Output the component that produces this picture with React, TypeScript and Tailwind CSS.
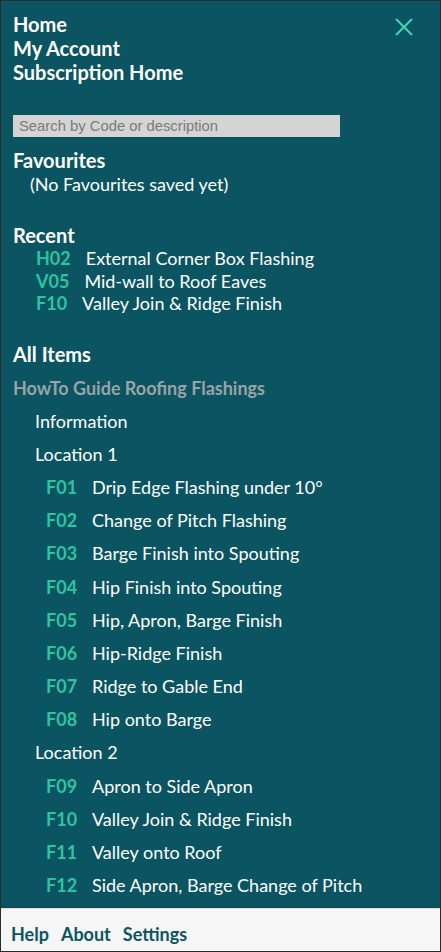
import React from "react";

const recent = [
  { code: "H02", label: "External Corner Box Flashing" },
  { code: "V05", label: "Mid-wall to Roof Eaves" },
  { code: "F10", label: "Valley Join & Ridge Finish" },
];

const loc1 = [
  ["F01", "Drip Edge Flashing under 10°"],
  ["F02", "Change of Pitch Flashing"],
  ["F03", "Barge Finish into Spouting"],
  ["F04", "Hip Finish into Spouting"],
  ["F05", "Hip, Apron, Barge Finish"],
  ["F06", "Hip-Ridge Finish"],
  ["F07", "Ridge to Gable End"],
  ["F08", "Hip onto Barge"],
];

const loc2 = [
  ["F09", "Apron to Side Apron"],
  ["F10", "Valley Join & Ridge Finish"],
  ["F11", "Valley onto Roof"],
  ["F12", "Side Apron, Barge Change of Pitch"],
];

function Item({ code, label }: { code: string; label: string }) {
  return (
    <div className="flex h-[33.2px] items-center pl-[33px] text-[18px]">
      <span className="w-[46px] font-bold text-[#2ec4a0]">{code}</span>
      <span className="text-white">{label}</span>
    </div>
  );
}

export default function App() {
  return (
    <div
      className="flex h-[952px] w-[441px] flex-col overflow-hidden border border-[#2b2b2b] bg-[#0b5461]"
      style={{ fontFamily: "Lato, 'Noto Sans', sans-serif" }}
    >
      <div className="relative flex-1 overflow-hidden px-3 pt-[11px]">
        <button className="absolute right-[27px] top-[17px] text-[#3fd6b0]" aria-label="close">
          <svg width="18" height="18" viewBox="0 0 18 18" fill="none" stroke="currentColor" strokeWidth="2">
            <path d="M1 1 L17 17 M17 1 L1 17" />
          </svg>
        </button>
        <nav className="flex flex-col text-[20px] font-bold leading-[24px] text-white">
          <span>Home</span>
          <span>My Account</span>
          <span>Subscription Home</span>
        </nav>
        <div
          className="mt-[31px] flex h-[22px] w-[327px] items-center bg-[#d4d4d4] px-[6px] text-[14.8px] text-[#7b7b7b]"
          style={{ fontFamily: "'Liberation Sans', Arial, sans-serif" }}
        >
          Search by Code or description
        </div>
        <h2 className="mt-[11px] text-[20px] font-bold leading-[24px] text-white">Favourites</h2>
        <p className="pl-[17px] text-[18px] leading-[24px] text-white">(No Favourites saved yet)</p>
        <h2 className="mt-[27px] text-[20px] font-bold leading-[24px] text-white">Recent</h2>
        <div className="flex flex-col pl-[23px] text-[18px] leading-[22.5px]">
          {recent.map((r) => (
            <div key={r.code} className="flex">
              <span className="mr-[15px] font-bold text-[#2ec4a0]">{r.code}</span>
              <span className="text-white">{r.label}</span>
            </div>
          ))}
        </div>
        <h2 className="mt-[27px] text-[20px] font-bold leading-[24px] text-white">All Items</h2>
        <h3 className="mt-[10px] text-[18px] font-bold leading-[24px] text-[#9aa3a6]">HowTo Guide Roofing Flashings</h3>
        <div className="mt-[5px] flex flex-col">
          <div className="flex h-[33.2px] items-center pl-[22px] text-[18px] text-white">Information</div>
          <div className="flex h-[33.2px] items-center pl-[22px] text-[18px] text-white">Location 1</div>
          {loc1.map(([c, l]) => (
            <Item key={c} code={c} label={l} />
          ))}
          <div className="flex h-[33.2px] items-center pl-[22px] text-[18px] text-white">Location 2</div>
          {loc2.map(([c, l]) => (
            <Item key={c} code={c} label={l} />
          ))}
        </div>
      </div>
      <footer className="flex h-[43px] shrink-0 items-center gap-[12px] border-t border-[#dcdcdc] bg-[#f6f6f6] px-[10px] pt-[8px] text-[18px] font-bold text-[#0b5461] shadow-[0_-1px_3px_rgba(0,0,0,0.15)]">
        <span>Help</span>
        <span>About</span>
        <span>Settings</span>
      </footer>
    </div>
  );
}
